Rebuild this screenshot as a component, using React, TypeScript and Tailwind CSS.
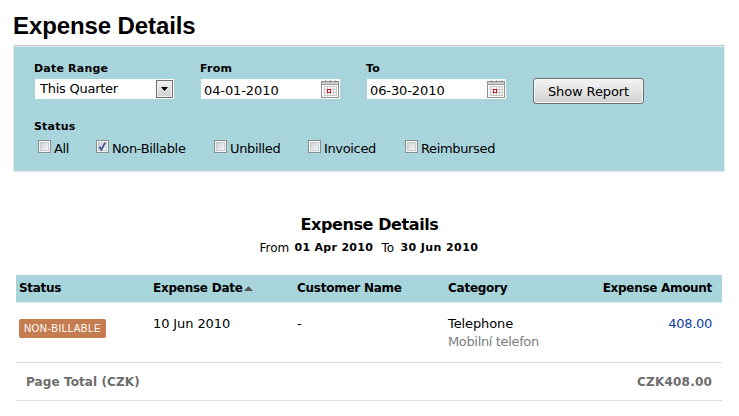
import { useState } from "react";

const statusOptions = [
  { label: "All", width: "w-[58px]" },
  { label: "Non-Billable", width: "w-[118px]" },
  { label: "Unbilled", width: "w-[94px]" },
  { label: "Invoiced", width: "w-[97px]" },
  { label: "Reimbursed", width: "w-[100px]" },
];

const CalendarIcon = () => (
  <svg width="19" height="19" viewBox="0 0 19 19" shapeRendering="crispEdges">
    <rect x="0.5" y="1.5" width="17" height="16" fill="#fff" stroke="#929292" />
    <rect x="1" y="2" width="16" height="2" fill="#cfcfcf" />
    <path d="M1 4.5h16" stroke="#9a9a9a" />
    <path d="M3 1.5h3M8 1.5h3M13 1.5h3" stroke="#777" />
    <path d="M4.5 0v3M9.5 0v3M14.5 0v3" stroke="#a8a8a8" />
    <path
      d="M3 6.5h13M3 9.5h13M3 12.5h13M3 15.5h13M3.5 6v10M6.5 6v10M9.5 6v10M12.5 6v10M15.5 6v10"
      stroke="#c8c8c8"
    />
    <rect x="6.5" y="9.5" width="3" height="3" fill="#fff" stroke="#c8141c" />
  </svg>
);

const FieldLabel = ({ children }: { children: string }) => (
  <div className="-ml-px h-[17px] text-[11px] leading-[14px] font-bold tracking-[0.2px]">
    {children}
  </div>
);

const DateField = ({ label, value }: { label: string; value: string }) => (
  <div className="w-[166px]">
    <FieldLabel>{label}</FieldLabel>
    <div className="flex h-5 w-[139px] items-center justify-between bg-white pl-[3px]">
      <span className="pt-[3px] text-[13px] leading-4 tracking-[-0.1px]">{value}</span>
      <CalendarIcon />
    </div>
  </div>
);

const StatusCheckbox = ({
  label,
  checked,
  onToggle,
}: {
  label: string;
  checked: boolean;
  onToggle: () => void;
}) => (
  <button
    type="button"
    role="checkbox"
    aria-checked={checked}
    onClick={onToggle}
    className="flex items-start gap-[3px] whitespace-nowrap"
  >
    <span className="flex size-[13px] shrink-0 border border-[#8b8e8f] bg-[#f4f4f4] p-px">
      <span className="flex size-[9px] border border-[#c9ccd0] bg-linear-to-br from-[#cbcfd5] to-[#f6f6f6]">
        {checked && (
          <svg width="9" height="11" viewBox="0 0 9 11" className="-mt-[2px] -ml-px shrink-0">
            <path d="M1.3 5.6 3.4 8.6 7.2 1.6" fill="none" stroke="#4a5f97" strokeWidth="1.9" />
          </svg>
        )}
      </span>
    </span>
    <span className="pt-px text-[13px] leading-4 tracking-[-0.35px]">{label}</span>
  </button>
);

const FilterPanel = () => {
  const [selected, setSelected] = useState<string[]>(["Non-Billable"]);

  const toggle = (label: string) =>
    setSelected((current) =>
      current.includes(label) ? current.filter((item) => item !== label) : [...current, label]
    );

  return (
    <section className="ml-[13px] h-[127px] w-[712px] border border-[#e6ecee] border-t-[#c3c7c8] bg-[#a8d4dc] pl-[21px]">
      <div className="-ml-[21px] h-px bg-[#e2eaec]" />
      <div className="flex pt-[15px]">
        <div className="w-[166px]">
          <FieldLabel>Date Range</FieldLabel>
          <div className="flex h-5 w-[139px] items-center justify-between bg-white pr-px pl-[5px]">
            <span className="text-[13px] leading-4 tracking-[-0.25px]">This Quarter</span>
            <span className="flex h-[18px] w-[17px] items-center justify-center border border-[#707070] bg-linear-to-b from-[#f3f3f3] to-[#cfcfcf] shadow-[inset_0_0_0_1px_#f3f3f3]">
              <svg width="7" height="4" viewBox="0 0 7 4">
                <path d="M0 0h7L3.5 4z" fill="#000" />
              </svg>
            </span>
          </div>
        </div>
        <DateField label="From" value="04-01-2010" />
        <DateField label="To" value="06-30-2010" />
        <button
          type="button"
          className="mt-4 h-[26px] w-[111px] rounded-[3px] border border-[#707070] bg-linear-to-b from-[#f3f3f3] via-[#e4e4e4] to-[#cecece] pt-px text-[13px] leading-4 tracking-[-0.1px] whitespace-nowrap shadow-[inset_0_0_0_1px_#f6f6f6]"
        >
          Show Report
        </button>
      </div>
      <div className="mt-4 -ml-px text-[11px] leading-[14px] font-bold tracking-[0.2px]">
        Status
      </div>
      <div className="flex pt-[6px] pl-[3px]">
        {statusOptions.map((option) => (
          <div key={option.label} className={option.width}>
            <StatusCheckbox
              label={option.label}
              checked={selected.includes(option.label)}
              onToggle={() => toggle(option.label)}
            />
          </div>
        ))}
      </div>
    </section>
  );
};

const ExpenseTable = () => (
  <div className="mt-[19px] ml-4 w-[706px]">
    <div className="grid h-7 grid-cols-[134px_144px_151px_1fr_140px] border-b border-[#e3eced] bg-[#a8d4dc] pt-[5px] pr-[10px] pl-[3px] text-[12px] leading-4 font-bold tracking-[-0.25px]">
      <span className="tracking-[-0.3px]">Status</span>
      <span className="flex h-4 items-center">
        Expense Date
        <svg width="9" height="5" viewBox="0 0 9 5" className="mt-px ml-px">
          <path d="M0 5 4.5 0 9 5z" fill="#555" />
        </svg>
      </span>
      <span>Customer Name</span>
      <span>Category</span>
      <span className="text-right tracking-[-0.3px] whitespace-nowrap">Expense Amount</span>
    </div>
    <div className="grid h-[60px] grid-cols-[134px_144px_151px_1fr_100px] border-b border-[#dcdcdc] pt-3 pr-[10px] pl-[3px] text-[13px] leading-[18px] tracking-[-0.1px]">
      <span>
        <span className="mt-1 flex h-[19px] w-[87px] items-center justify-center rounded-[2px] bg-[#c57d4f] font-['Liberation_Sans',sans-serif] text-[10px] tracking-[0.45px] text-white">
          NON-BILLABLE
        </span>
      </span>
      <span>10 Jun 2010</span>
      <span>-</span>
      <span>
        Telephone
        <br />
        <span className="tracking-[-0.35px] text-[#7d7d7d]">Mobilní telefon</span>
      </span>
      <a href="#expense" className="text-right tracking-[-0.3px] text-[#0b3da8]">
        408.00
      </a>
    </div>
    <div className="flex h-[38px] items-center justify-between border-b border-[#dcdcdc] pt-px pr-[10px] pl-[10px] text-[12px] leading-4 font-bold tracking-[0.1px] text-[#6c6c6c]">
      <span>Page Total (CZK)</span>
      <span className="tracking-[0.2px]">CZK408.00</span>
    </div>
  </div>
);

export default function App() {
  return (
    <main className="h-[416px] w-[739px] overflow-hidden bg-white font-['DejaVu_Sans',sans-serif] text-black">
      <h1 className="h-[45px] pt-3 pl-[13px] font-['Liberation_Sans',sans-serif] text-[24px] leading-7 font-bold tracking-[-0.1px]">
        Expense Details
      </h1>
      <FilterPanel />
      <header className="mt-[43px] text-center">
        <h2 className="text-[16px] leading-5 font-bold tracking-[-0.4px]">Expense Details</h2>
        <p className="mt-[5px] flex justify-center text-[11px] leading-4">
          <span className="w-[35px] text-left text-[12px]">From</span>
          <strong className="w-[87px] text-left tracking-[0.3px]">01 Apr 2010</strong>
          <span className="w-[19px] text-left text-[12px]">To</span>
          <strong className="w-[79px] text-left tracking-[0.4px]">30 Jun 2010</strong>
        </p>
      </header>
      <ExpenseTable />
    </main>
  );
}
